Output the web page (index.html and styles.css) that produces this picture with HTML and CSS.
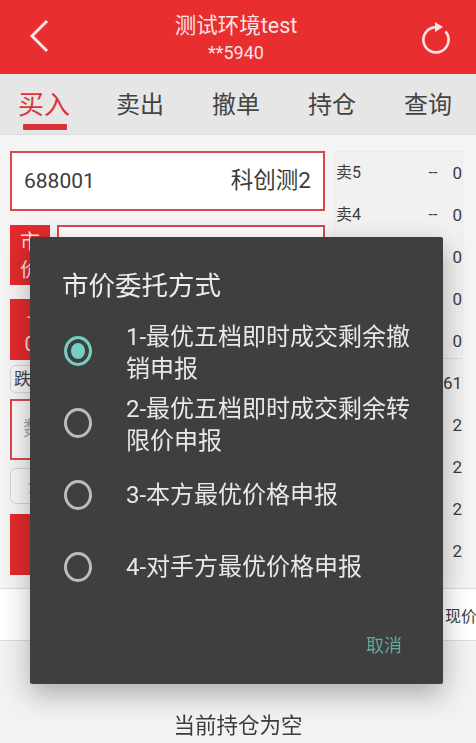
FILE: index.html
```html
<!DOCTYPE html>
<html lang="zh-CN">
<head>
<meta charset="utf-8">
<title>买入</title>
<link rel="stylesheet" href="styles.css">
</head>
<body>
<div class="page">
  <header class="topbar">
    <svg class="top-icon" width="24" height="40" viewBox="0 0 24 40"><path d="M19 3 L4 18 L19 33" fill="none" stroke="#fbe3e3" stroke-width="3"/></svg>
    <div class="top-title">
      <div class="top-name">测试环境test</div>
      <div class="top-acct">**5940</div>
    </div>
    <svg class="top-icon refresh" width="32" height="36" viewBox="0 0 32 36"><path d="M15 6.2 A12.6 12.6 0 1 0 25.4 10.4" fill="none" stroke="#fbe3e3" stroke-width="2.6"/><path d="M15 1 L23 6 L15 11 Z" fill="#fbe3e3"/></svg>
  </header>

  <nav class="tabs">
    <div class="tab tab-active">买入<span class="tab-line"></span></div>
    <div class="tab">卖出</div>
    <div class="tab">撤单</div>
    <div class="tab">持仓</div>
    <div class="tab">查询</div>
  </nav>

  <main class="trade">
    <section class="form">
      <div class="box code-box"><span>688001</span><span class="code-name">科创测2</span></div>
      <div class="price-row">
        <div class="red-side">市<br>价</div>
        <div class="box grow"></div>
      </div>
      <div class="red-side step">-<br>0</div>
      <div class="chip-row"><div class="chip">跌</div></div>
      <div class="box qty-box">数</div>
      <div class="chip-row chip-tall"><div class="chip chip-inner">全</div></div>
      <div class="buy-btn"></div>
    </section>
    <section class="book">
      <div class="book-block sell">
        <div class="book-row"><span>卖5</span><span class="book-nums"><i>--</i><b>0</b></span></div>
        <div class="book-row"><span>卖4</span><span class="book-nums"><i>--</i><b>0</b></span></div>
        <div class="book-row"><span>卖3</span><span class="book-nums"><i>--</i><b>0</b></span></div>
        <div class="book-row"><span>卖2</span><span class="book-nums"><i>--</i><b>0</b></span></div>
        <div class="book-row"><span>卖1</span><span class="book-nums"><i>--</i><b>0</b></span></div>
      </div>
      <div class="book-block buy">
        <div class="book-row"><span>买1</span><span class="book-nums"><b>61</b></span></div>
        <div class="book-row"><span>买2</span><span class="book-nums"><b>2</b></span></div>
        <div class="book-row"><span>买3</span><span class="book-nums"><b>2</b></span></div>
        <div class="book-row"><span>买4</span><span class="book-nums"><b>2</b></span></div>
        <div class="book-row"><span>买5</span><span class="book-nums"><b>2</b></span></div>
      </div>
    </section>
  </main>

  <div class="columns"><span>现价</span></div>
  <footer class="empty">当前持仓为空</footer>

  <div class="dialog">
    <h2 class="dialog-title">市价委托方式</h2>
    <div class="option option-on option-two"><span class="radio"></span><span class="option-text">1-最优五档即时成交剩余撤销申报</span></div>
    <div class="option option-two"><span class="radio"></span><span class="option-text">2-最优五档即时成交剩余转限价申报</span></div>
    <div class="option"><span class="radio"></span><span class="option-text">3-本方最优价格申报</span></div>
    <div class="option"><span class="radio"></span><span class="option-text">4-对手方最优价格申报</span></div>
    <div class="dialog-actions"><span class="cancel">取消</span></div>
  </div>
</div>
</body>
</html>
```
FILE: styles.css
```css
* { box-sizing: border-box; }
html, body { margin: 0; padding: 0; }
body { font-family: Roboto, "Noto Sans CJK SC", sans-serif; color: #3c3c3c; background: #f2f2f2; }
.page { position: relative; width: 476px; height: 743px; overflow: hidden; display: flex; flex-direction: column; filter: blur(0.45px); }

.topbar { height: 74px; flex: none; background: #e92e30; display: flex; align-items: center; justify-content: space-between; padding: 0 24px 0 28px; color: #fbe3e3; }
.top-icon { display: block; margin-top: 2px; }
.refresh { margin-top: 4px; }
.top-title { text-align: center; margin-top: 1px; }
.top-name { font-size: 21.5px; line-height: 30px; }
.top-acct { font-size: 18px; line-height: 24px; }

.tabs { height: 61px; flex: none; background: #e6e6e6; border-bottom: 1px solid #dcdcdc; display: flex; }
.tab { position: relative; width: 96px; text-align: center; font-size: 24px; line-height: 63px; color: #444; }
.tab-active { color: #d9363a; font-size: 26px; }
.tab-line { position: absolute; left: 27px; top: 50px; width: 44px; height: 6px; background: #d9303a; border-radius: 1px; }
.tabs .tab:first-child { margin-left: -4px; }

.trade { height: 454px; flex: none; padding: 16px 13px 0 10px; display: flex; justify-content: space-between; background: #f4f4f4; border-bottom: 1px solid #dedede; }
.form { width: 315px; display: flex; flex-direction: column; }
.box { background: #fff; border: 2px solid #d9484a; }
.code-box { height: 60px; flex: none; display: flex; align-items: center; justify-content: space-between; padding: 0 12px; font-size: 21px; }
.code-name { font-size: 22.5px; line-height: 28px; margin-top: -3px; }
.price-row { height: 60px; flex: none; margin-top: 14px; display: flex; gap: 7px; }
.grow { flex: 1; }
.red-side { width: 40px; background: #e42a2c; color: #f9dede; font-size: 20px; line-height: 28px; text-align: center; padding-top: 3px; }
.step { height: 61px; flex: none; margin-top: 14px; }
.chip-row { height: 28px; flex: none; margin-top: 5px; background: #f6f6f6; border: 1px solid #d4d4d4; border-radius: 6px; }
.chip { font-size: 17px; line-height: 26px; padding-left: 3px; color: #444; }
.chip-inner { padding-left: 17px; line-height: 34px; color: #888; }
.qty-box { height: 61px; flex: none; margin-top: 6px; background: #f9f9f9; color: #aaa; font-size: 20px; line-height: 57px; padding-left: 11px; }
.chip-tall { height: 36px; margin-top: 8px; }
.buy-btn { height: 61px; flex: none; margin-top: 10px; background: #e42a2c; }

.book { width: 129px; height: 424px; background: #f1f1f1; border: 1px solid #ebebeb; font-size: 16px; }
.book-block { display: flex; flex-direction: column; gap: 8px; }
.sell { height: 207px; padding-top: 4px; border-bottom: 1px solid #dcdcdc; }
.buy { padding-top: 7px; }
.book-row { height: 34px; flex: none; display: flex; justify-content: space-between; align-items: center; line-height: 34px; padding: 0 0 0 1px; }
.book-nums { display: flex; align-items: center; gap: 15px; }
.book-nums i { font-style: normal; }
.book-nums b { font-weight: 400; font-size: 17px; }

.columns { height: 52px; flex: none; background: #fff; border-bottom: 1px solid #dcdcdc; display: flex; justify-content: flex-end; align-items: center; font-size: 16px; overflow: hidden; }
.columns span { margin-right: -1px; }
.empty { flex: 1; display: flex; align-items: flex-end; justify-content: center; font-size: 21.5px; line-height: 30px; padding: 0 0 2px 0; color: #3c3c3c; }

.dialog { position: absolute; left: 30px; top: 237px; width: 413px; height: 447px; background: #3f3f3f; border-radius: 2px; box-shadow: 0 10px 28px rgba(0,0,0,.3); color: #ececec; padding: 31px 0 0 33px; }
.dialog-title { margin: 0 0 0 -1px; font-weight: 400; font-size: 26.5px; line-height: 36px; }
.option { display: flex; align-items: center; min-height: 72px; font-size: 24px; line-height: 32px; color: #e8e8e8; }
.dialog-title + .option { margin-top: 11px; }
.radio { flex: none; width: 28px; height: 30px; border: 3px solid #bcbcbc; border-radius: 50%; margin-left: 1px; margin-right: 34px; }
.option-on .radio { border-color: #74cfc2; background: #74cfc2; box-shadow: inset 0 0 0 4px #3f3f3f; }
.option-text { width: 288px; }
.option-two .option-text { padding-top: 3px; }
.dialog-actions { display: flex; justify-content: flex-end; padding: 30px 41px 0 0; }
.cancel { font-size: 18px; line-height: 26px; color: #5fa89b; }
```
